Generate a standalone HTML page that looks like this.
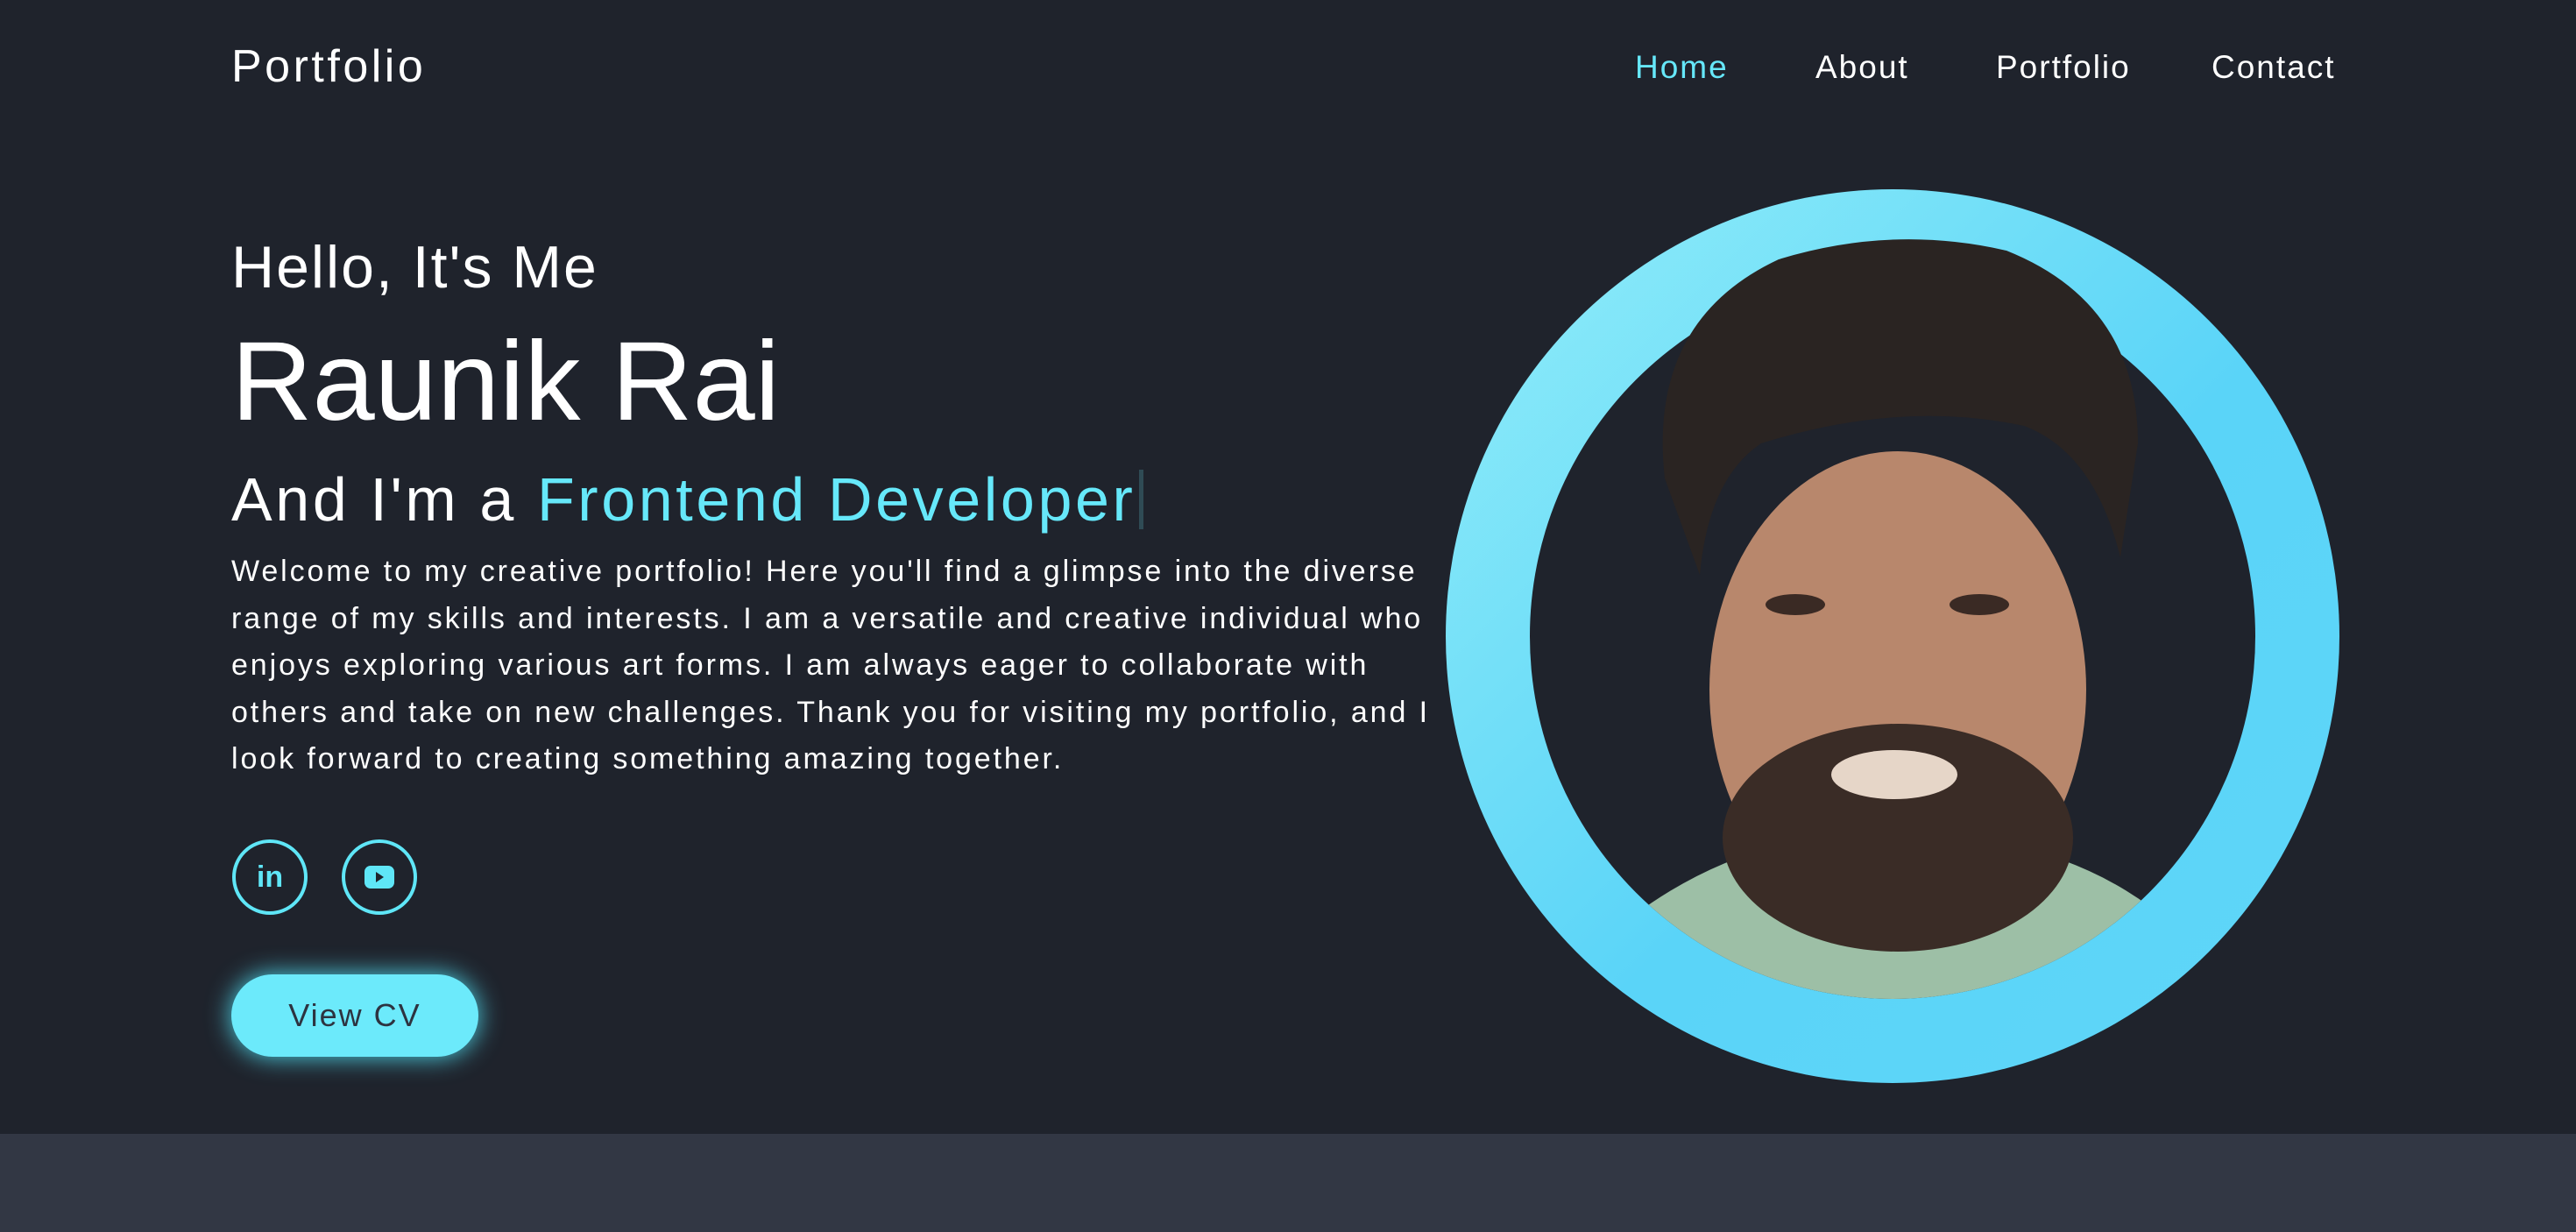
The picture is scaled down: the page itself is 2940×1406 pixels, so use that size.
<!DOCTYPE html>
<html><head><meta charset="utf-8"><style>
*{margin:0;padding:0;box-sizing:border-box}
html,body{width:2940px;height:1406px;overflow:hidden;background:#1f232c;font-family:"Liberation Sans",sans-serif;color:#fff}
.bottom{position:absolute;left:0;top:1294px;width:2940px;height:112px;background:#323744}
.logo{position:absolute;left:264px;top:46px;font-size:52px;letter-spacing:3.5px}
.nav{position:absolute;top:56px;font-size:37px;letter-spacing:2px}
.cy{color:#66e8fa}
.caret{display:inline-block;width:5px;height:68px;background:#2f4b55;vertical-align:-10px;margin-left:4px}
.p{position:absolute;left:264px;top:626px;font-size:34px;line-height:53.5px;white-space:nowrap;letter-spacing:2.9px}
.soc{position:absolute;top:958px;width:86px;height:86px;border:4px solid #5fe6f7;border-radius:50%;display:flex;align-items:center;justify-content:center;color:#5fe6f7}
.btn{position:absolute;left:264px;top:1112px;width:282px;height:94px;border-radius:47px;background:#6ceafb;box-shadow:0 0 28px #4fd7ea;color:#2d3340;font-size:36px;letter-spacing:2px;display:flex;align-items:center;justify-content:center}
.ring{position:absolute;left:1650px;top:216px;width:1020px;height:1020px;border-radius:50%;background:linear-gradient(135deg,#93eef9,#5ad4f8 55%,#5fd6f8)}
</style></head><body>
<div class="bottom"></div>
<div class="logo">Portfolio</div>
<div class="nav" style="left:1866px;color:#66e8fa">Home</div>
<div class="nav" style="left:2072px">About</div>
<div class="nav" style="left:2278px">Portfolio</div>
<div class="nav" style="left:2524px">Contact</div>
<div style="position:absolute;left:264px;top:266px;font-size:68px;letter-spacing:2px">Hello, It's Me</div>
<div style="position:absolute;left:264px;top:362px;font-size:128px">Raunik Rai</div>
<div style="position:absolute;left:264px;top:530px;font-size:70px;white-space:nowrap;letter-spacing:3.6px">And I'm a <span class="cy">Frontend Developer</span><span class="caret"></span></div>
<div class="p">Welcome to my creative portfolio! Here you'll find a glimpse into the diverse<br>range of my skills and interests. I am a versatile and creative individual who<br>enjoys exploring various art forms. I am always eager to collaborate with<br>others and take on new challenges. Thank you for visiting my portfolio, and I<br>look forward to creating something amazing together.</div>
<div class="soc" style="left:265px;font-weight:bold;font-size:34px">in</div>
<div class="soc" style="left:390px"><svg width="34" height="26" viewBox="0 0 34 26"><rect x="0" y="0" width="34" height="26" rx="7" fill="#5fe6f7"/><path d="M13 7 L22 13 L13 19Z" fill="#1f232c"/></svg></div>
<div class="btn">View CV</div>
<div class="ring"></div>
<svg style="position:absolute;left:1650px;top:216px" width="1020" height="1020" viewBox="0 0 1020 1020">
<defs><clipPath id="c"><circle cx="510" cy="510" r="414"/></clipPath></defs>
<circle cx="510" cy="510" r="414" fill="#1f232c"/>
<g clip-path="url(#c)">
<path d="M200 840 Q300 760 420 740 L600 740 Q740 760 830 840 L860 1020 L170 1020Z" fill="#9dbfa6"/>
<ellipse cx="516" cy="571" rx="215" ry="272" fill="#b8876c"/>
<ellipse cx="516" cy="740" rx="200" ry="130" fill="#3a2c26"/>
<ellipse cx="512" cy="668" rx="72" ry="28" fill="#e6d6c8"/>
<ellipse cx="399" cy="474" rx="34" ry="12" fill="#3a2a24"/>
<ellipse cx="609" cy="474" rx="34" ry="12" fill="#3a2a24"/>
</g>
<path d="M250 330 Q230 150 380 80 Q510 40 640 70 Q790 130 790 290 L770 420 Q740 300 660 270 Q520 240 360 290 Q300 330 290 440 Z" fill="#2a2422"/>
</svg>
</body></html>
